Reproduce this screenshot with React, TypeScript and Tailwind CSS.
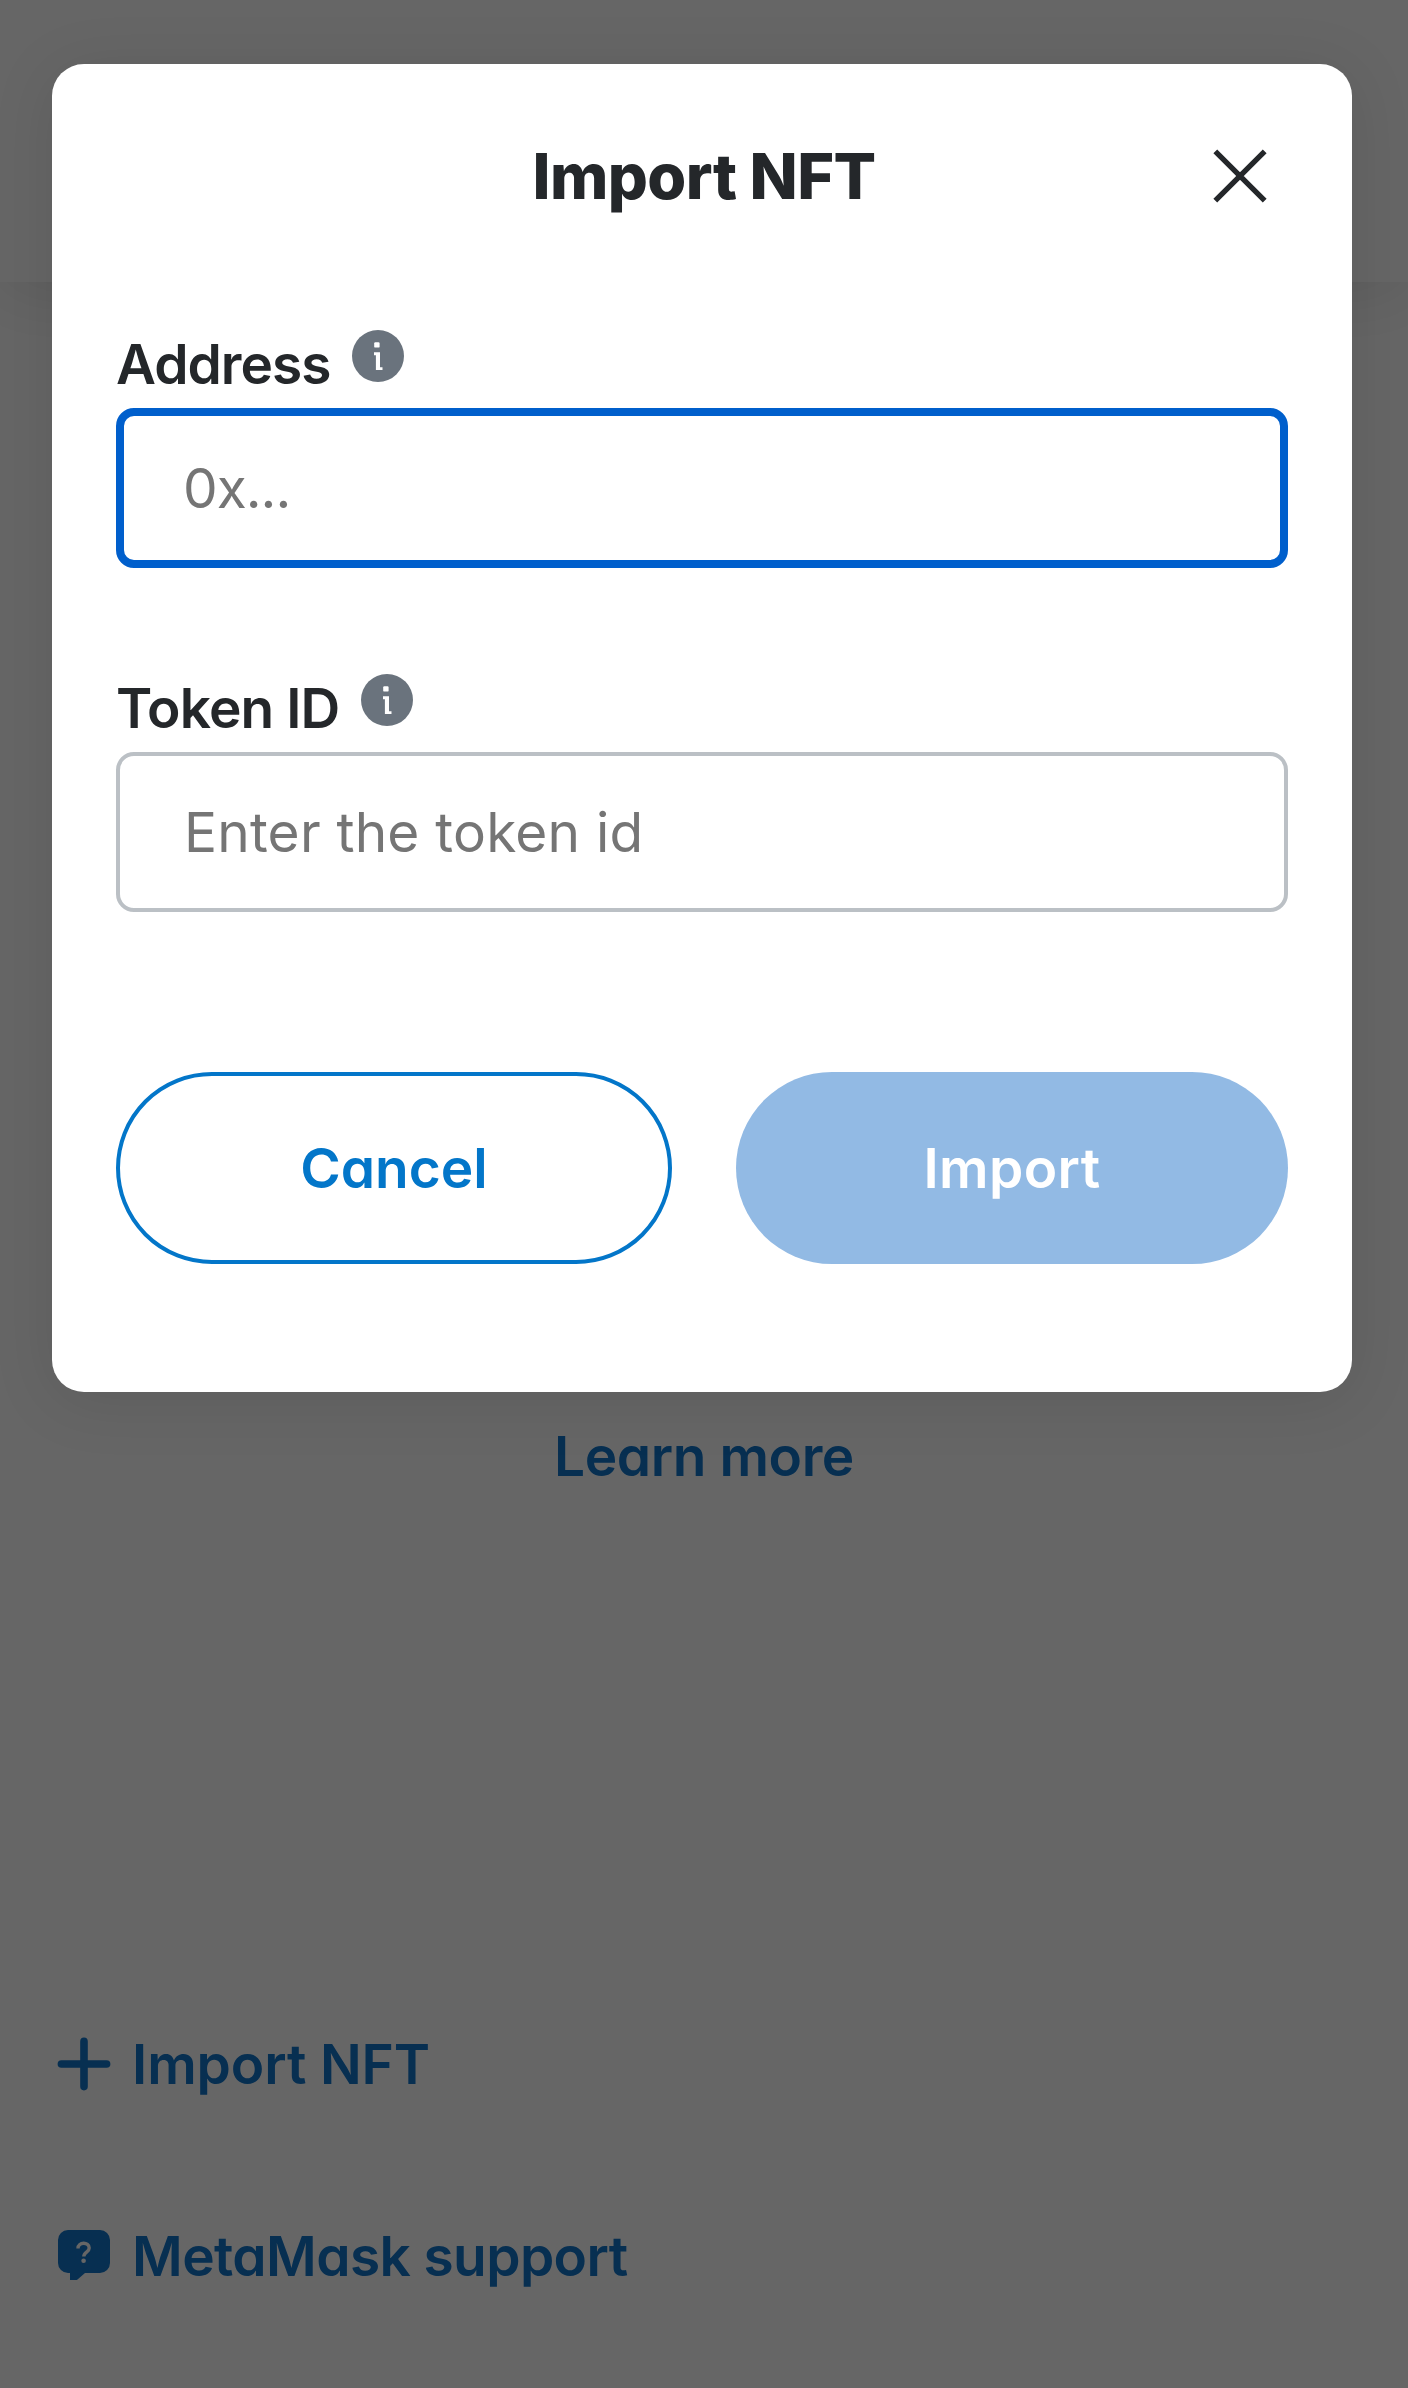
import { clsx } from "clsx";

type FieldProps = {
  label: string;
  placeholder: string;
  focused?: boolean;
  labelClassName?: string;
  inputClassName?: string;
  className?: string;
};

function InfoIcon() {
  return (
    <svg viewBox="0 0 52 52" className="-mt-4 size-[52px] shrink-0" aria-hidden>
      <circle cx="26" cy="26" r="26" fill="#6a737d" />
      <rect x="22.2" y="12.2" width="5.4" height="5.4" rx="1.2" fill="#fff" />
      <path d="M22 22.2H28v15h2.5v2.8h-6.6V25.2h-1.9z" fill="#fff" />
    </svg>
  );
}

function CloseIcon() {
  return (
    <svg viewBox="0 0 80 80" className="size-20" fill="none" aria-hidden>
      <path d="M15.3 15.3 64.7 64.7M64.7 15.3 15.3 64.7" stroke="#24272a" strokeWidth="5.4" />
    </svg>
  );
}

function PlusIcon() {
  return (
    <svg viewBox="0 0 64 64" className="size-16 shrink-0" fill="none" aria-hidden>
      <path
        d="M32 9.4v45.2M9.4 32h45.2"
        stroke="currentColor"
        strokeWidth="7.6"
        strokeLinecap="round"
      />
    </svg>
  );
}

function SupportIcon() {
  return (
    <svg viewBox="0 0 64 64" className="size-16 shrink-0" fill="none" aria-hidden>
      <path
        d="M16 6h32a10 10 0 0 1 10 10v23a10 10 0 0 1-10 10H33l-7.5 6.5q-.8.6-2 .6H18V49h-2A10 10 0 0 1 6 39V16A10 10 0 0 1 16 6z"
        fill="currentColor"
      />
      <path
        d="M26 24.4c0-6.8 11.2-6.8 11.2-.4 0 4.4-5.4 3.8-5.4 8.6"
        stroke="#fff"
        strokeWidth="3.4"
      />
      <circle cx="31.6" cy="36.8" r="2.3" fill="#fff" />
    </svg>
  );
}

function Field({
  label,
  placeholder,
  focused = false,
  labelClassName,
  inputClassName,
  className,
}: FieldProps) {
  return (
    <div className={className}>
      <div className="mb-3 flex h-16 items-center gap-[22px]">
        <span className={clsx("font-semibold leading-[64px] text-[#24272a]", labelClassName)}>
          {label}
        </span>
        <InfoIcon />
      </div>
      <input
        type="text"
        placeholder={placeholder}
        className={clsx(
          "block h-40 w-full rounded-[18px] bg-white outline-none placeholder:text-[#757575]",
          focused ? "border-8 border-[#005fcc] px-[59px]" : "border-4 border-[#bbc0c5] px-16",
          inputClassName
        )}
      />
    </div>
  );
}

function ImportNftModal() {
  return (
    <div className="w-[1300px] rounded-[32px] bg-white px-16 pt-[72px] pb-32 shadow-[0_8px_64px_rgba(0,0,0,0.1)]">
      <div className="grid h-20 grid-cols-[88px_1fr_88px] items-center">
        <span />
        <h2 className="pl-1 text-center text-[63px] leading-[78px] font-extrabold tracking-[-0.6px] text-[#24272a]">
          Import NFT
        </h2>
        <button type="button" aria-label="Close">
          <CloseIcon />
        </button>
      </div>

      <Field
        label="Address"
        placeholder="0x..."
        focused
        className="mt-[116px]"
        labelClassName="tracking-[-1px]"
        inputClassName="tracking-[-1px]"
      />
      <Field
        label="Token ID"
        placeholder="Enter the token id"
        className="mt-[108px]"
        labelClassName="tracking-[-0.9px]"
        inputClassName="tracking-[0.2px]"
      />

      <div className="mt-40 flex gap-16">
        <button
          type="button"
          className="h-48 w-[556px] rounded-full border-4 border-[#0376c9] font-semibold text-[#0376c9]"
        >
          Cancel
        </button>
        <button
          type="button"
          disabled
          className="h-48 flex-1 rounded-full bg-[#92bae4] font-semibold tracking-[0.4px] text-white"
        >
          Import
        </button>
      </div>
    </div>
  );
}

export default function App() {
  return (
    <div className="relative h-[2388px] w-[1408px] overflow-hidden bg-white font-['Inter',sans-serif] text-[55px] [font-feature-settings:'cv11']">
      <div className="flex h-full flex-col text-[#1276cb]">
        <header className="h-[282px] shrink-0 bg-white shadow-[0_8px_64px_rgba(0,0,0,0.1)]" />
        <main className="flex flex-1 flex-col pt-[1134px] leading-[80px] font-semibold">
          <a className="text-center tracking-[-0.4px]">Learn more</a>
          <div className="mt-[528px] flex flex-col gap-28 pl-[52px]">
            <a className="flex h-20 items-center gap-4 tracking-[-0.1px]">
              <PlusIcon />
              Import NFT
            </a>
            <a className="flex h-20 items-center gap-4 tracking-[-0.6px]">
              <SupportIcon />
              MetaMask support
            </a>
          </div>
        </main>
      </div>

      <div className="absolute inset-0 flex items-start bg-black/60 pt-16 pl-[52px]">
        <ImportNftModal />
      </div>
    </div>
  );
}
